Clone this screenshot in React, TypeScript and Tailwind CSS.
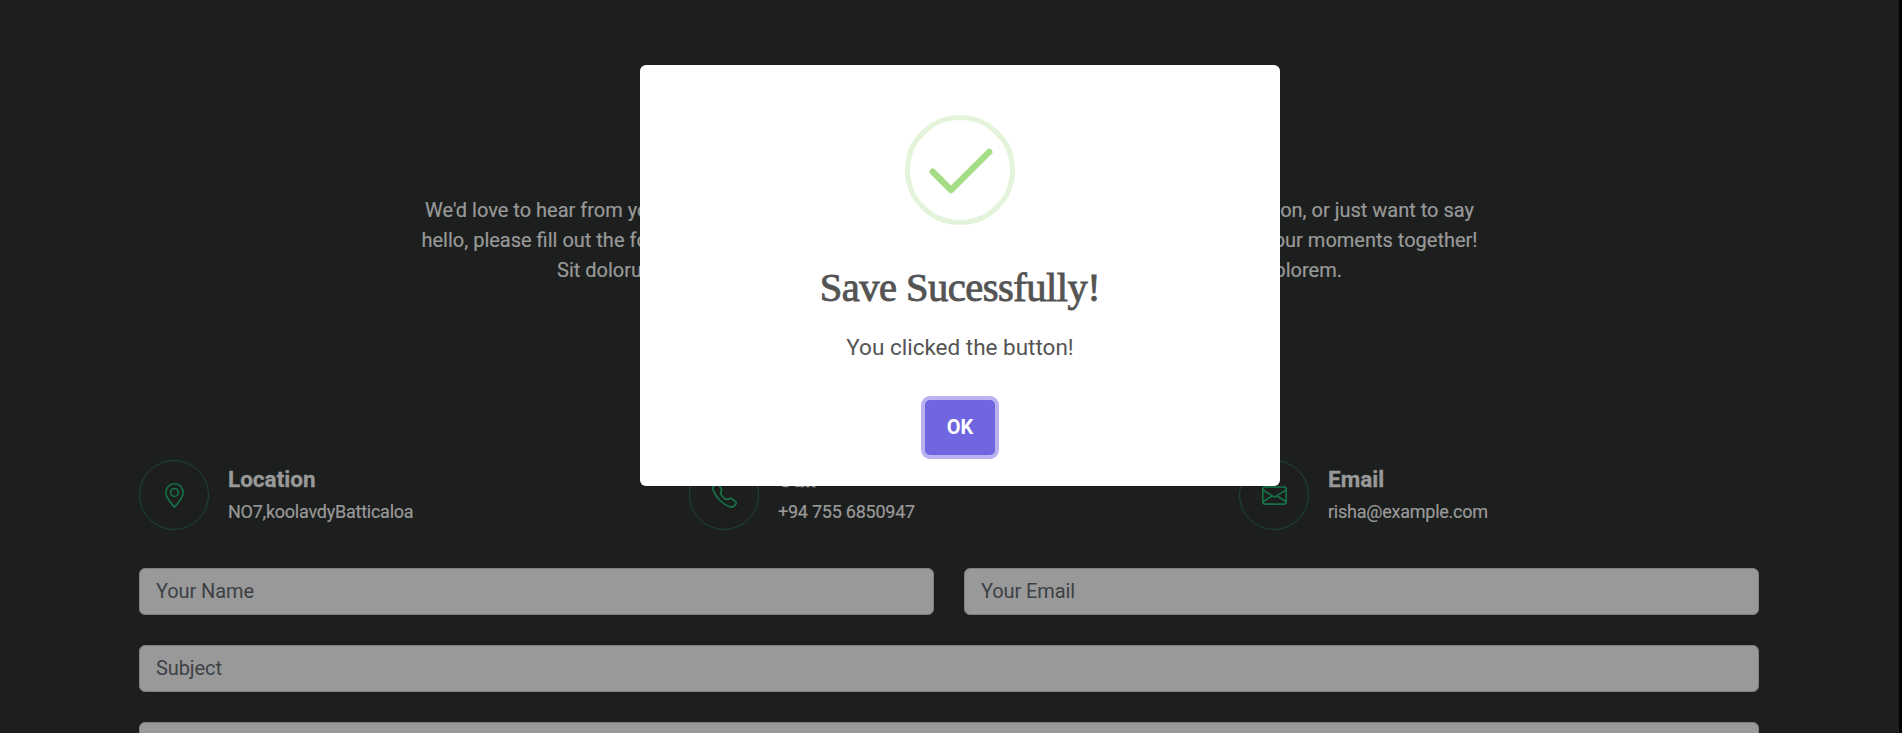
import React from "react";
import { BsGeoAlt, BsTelephone, BsEnvelope } from "react-icons/bs";
import type { IconType } from "react-icons";

const intro = [
  { width: "w-[1049px]", start: "We'd love to hear from you!", end: "session, or just want to say" },
  { width: "w-[1056px]", start: "hello, please fill out the form", end: "capture your moments together!" },
  { width: "w-[785px]", start: "Sit dolorum", end: "dolorem." },
];

function Info({ icon: Icon, title, text }: { icon: IconType; title: string; text: string }) {
  return (
    <div className="flex h-[70px] w-[550px]">
      <div className="flex size-[70px] shrink-0 items-center justify-center rounded-full border border-[#1c4636] text-[#16744a]">
        <Icon size={25} />
      </div>
      <div className="ml-[19px] pt-[6px]">
        <h3 className="text-[22.5px] leading-[26px] font-bold [-webkit-text-stroke:0.3px_#999999]">{title}</h3>
        <p className="mt-[6px] text-[18px] leading-[27px] tracking-[-0.24px] [-webkit-text-stroke:0.2px_#999999]">{text}</p>
      </div>
    </div>
  );
}

function Field({ label }: { label: string }) {
  return (
    <input
      placeholder={label}
      className="h-[47px] w-full rounded-md border border-[#7d8080] bg-[#999999] px-4 pb-[2px] text-[20px] tracking-[-0.1px] text-[#3d4145] placeholder:text-[#3d4145] placeholder:opacity-100"
    />
  );
}

export default function App() {
  return (
    <div className="relative h-[733px] overflow-hidden border-r-[3px] border-black bg-[#1d1f1e] font-['Roboto',sans-serif] text-[#999999]">
      <div className="flex flex-col items-center pt-[195px] text-[20px] leading-[30px] [-webkit-text-stroke:0.2px_#999999]">
        {intro.map((line) => (
          <p key={line.start} className={`flex justify-between whitespace-nowrap ${line.width}`}>
            <span>{line.start}</span>
            <span>{line.end}</span>
          </p>
        ))}
      </div>

      <div className="mt-[175px] flex pl-[139px]">
        <Info icon={BsGeoAlt} title="Location" text="NO7,koolavdyBatticaloa" />
        <Info icon={BsTelephone} title="Call" text="+94 755 6850947" />
        <Info icon={BsEnvelope} title="Email" text="risha@example.com" />
      </div>

      <form className="mt-[38px] ml-[139px] grid w-[1620px] grid-cols-2 gap-[30px]">
        <Field label="Your Name" />
        <Field label="Your Email" />
        <div className="col-span-2">
          <Field label="Subject" />
        </div>
        <div className="col-span-2 h-[200px] rounded-md border border-[#7d8080] bg-[#999999]" />
      </form>

      <div
        role="dialog"
        className="absolute top-[65px] left-[640px] flex h-[421px] w-[640px] flex-col items-center rounded-[6px] bg-white pt-[50px] text-[#545454]"
      >
        <svg width="110" height="110" viewBox="0 0 110 110" fill="none">
          <circle cx="55" cy="55" r="52.5" stroke="#e3f4da" strokeWidth="5" />
          <path d="M27.7 56.7 L46 75 L84.2 37" stroke="#a5dc86" strokeWidth="6.4" strokeLinecap="round" strokeLinejoin="round" />
        </svg>
        <h2 className="mt-[39px] h-[48px] font-['Liberation_Serif',serif] text-[40.5px] leading-[48px] tracking-[-0.5px] whitespace-nowrap [-webkit-text-stroke:0.9px_#545454]">
          Save Sucessfully!
        </h2>
        <p className="mt-[18px] text-[22.5px] leading-[34px]">You clicked the button!</p>
        <button className="mt-[36px] h-[55px] w-[70px] rounded-[5px] bg-[#7066e0] pb-[1px] text-[20px] font-bold text-white shadow-[0_0_0_4px_#b8b3f0]">
          OK
        </button>
      </div>
    </div>
  );
}
